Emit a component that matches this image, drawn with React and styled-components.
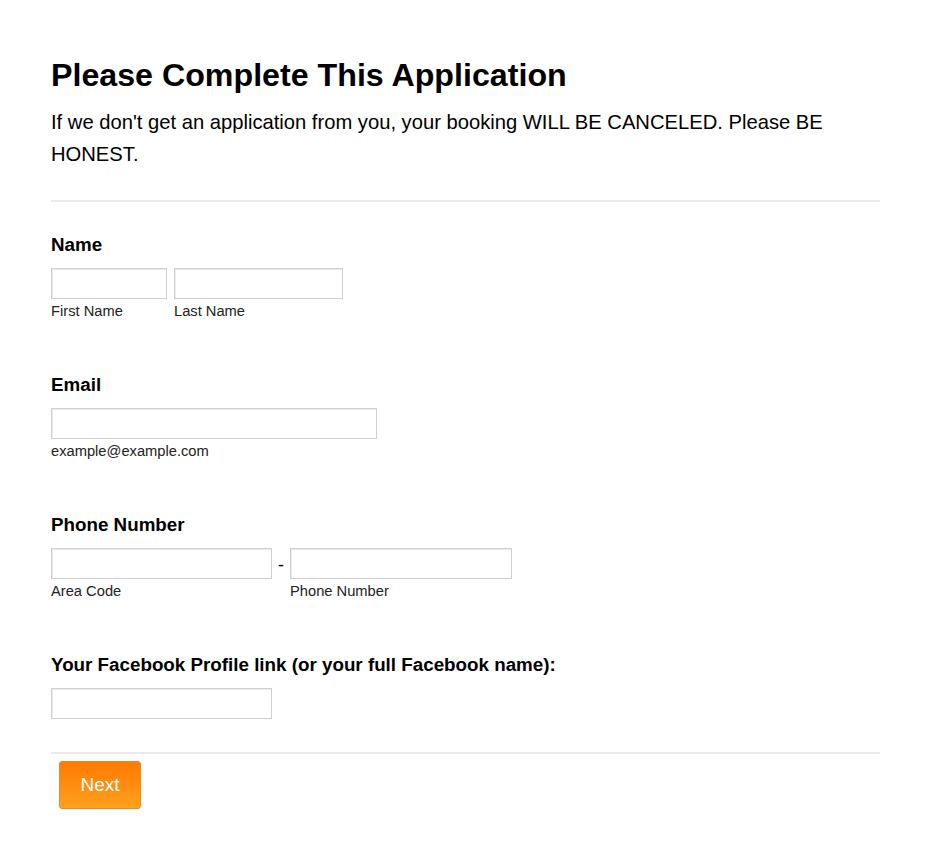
import React from "react";
import styled, { createGlobalStyle } from "styled-components";

const Global = createGlobalStyle`
  html, body { margin: 0; padding: 0; background: #fff; }
  body { font-family: "Liberation Sans", Arial, sans-serif; color: #000; }
  * { box-sizing: border-box; }
`;

const Page = styled.div`
  padding: 56px 50px 30px 51px;
`;

const Title = styled.h1`
  margin: 0;
  font-size: 32.2px;
  line-height: 38px;
  font-weight: 700;
`;

const Intro = styled.p`
  margin: 12px 0 0;
  font-size: 20.2px;
  line-height: 32px;
`;

const Divider = styled.hr`
  margin: ${(p) => p.$mt || 0}px 0 0;
  border: 0;
  height: 2px;
  background: #ebebeb;
`;

const Section = styled.div`
  margin-top: ${(p) => p.$mt}px;
`;

const Label = styled.div`
  font-size: 18.8px;
  line-height: 24px;
  font-weight: 700;
`;

const Row = styled.div`
  display: flex;
  align-items: flex-start;
  margin-top: 11px;
  gap: ${(p) => p.$gap || 0}px;
`;

const Field = styled.div`
  display: flex;
  flex-direction: column;
  width: ${(p) => p.$w}px;
`;

const Input = styled.input`
  width: 100%;
  height: 31px;
  margin: 0;
  padding: 4px 6px;
  border: 1px solid #cfcfcf;
  box-shadow: inset 1px 1px 0 #ececec;
  background: #fff;
  font-family: inherit;
  font-size: 15px;
  outline: none;
`;

const Sub = styled.span`
  margin-top: 3px;
  font-size: 14.7px;
  line-height: 19px;
  color: #222;
  white-space: nowrap;
`;

const Dash = styled.span`
  width: 18px;
  text-align: center;
  font-size: 18px;
  line-height: 31px;
  padding-top: 2px;
`;

const Footer = styled.div`
  padding: 7px 0 0 8px;
`;

const NextButton = styled.button`
  width: 82px;
  height: 48px;
  border: 1px solid #e98a26;
  border-radius: 3px;
  background: linear-gradient(to bottom, #ff7a00 0%, #ff8c10 50%, #ffa21c 100%);
  color: #fff;
  font-family: "Liberation Sans", Arial, sans-serif;
  font-size: 19px;
  cursor: pointer;
  padding: 0;
`;

export default function App() {
  return (
    <Page>
      <Global />
      <Title>Please Complete This Application</Title>
      <Intro>
        If we don't get an application from you, your booking WILL BE CANCELED. Please BE HONEST.
      </Intro>
      <Divider $mt={30} />

      <Section $mt={31}>
        <Label>Name</Label>
        <Row $gap={7}>
          <Field $w={116}>
            <Input />
            <Sub>First Name</Sub>
          </Field>
          <Field $w={169}>
            <Input />
            <Sub>Last Name</Sub>
          </Field>
        </Row>
      </Section>

      <Section $mt={52}>
        <Label>Email</Label>
        <Row>
          <Field $w={326}>
            <Input />
            <Sub>example@example.com</Sub>
          </Field>
        </Row>
      </Section>

      <Section $mt={52}>
        <Label>Phone Number</Label>
        <Row>
          <Field $w={221}>
            <Input />
            <Sub>Area Code</Sub>
          </Field>
          <Dash>-</Dash>
          <Field $w={222}>
            <Input />
            <Sub>Phone Number</Sub>
          </Field>
        </Row>
      </Section>

      <Section $mt={52}>
        <Label>Your Facebook Profile link (or your full Facebook name):</Label>
        <Row>
          <Field $w={221}>
            <Input />
          </Field>
        </Row>
      </Section>

      <Divider $mt={33} />
      <Footer>
        <NextButton>Next</NextButton>
      </Footer>
    </Page>
  );
}
